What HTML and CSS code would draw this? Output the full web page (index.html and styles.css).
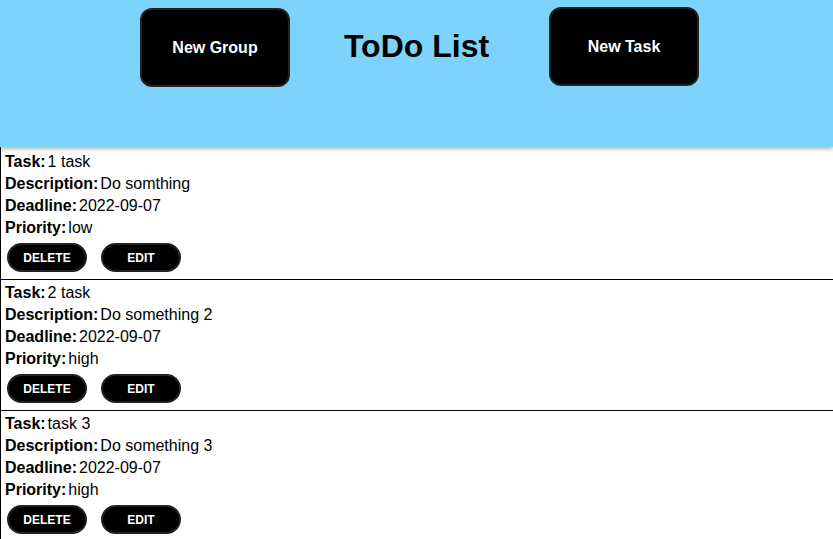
FILE: index.html
```html
<!DOCTYPE html>
<html>
<head>
<meta charset="utf-8">
<link rel="stylesheet" href="styles.css">
</head>
<body>
<header class="header">
  <button class="head-btn">New Group</button>
  <h1 class="title">ToDo List</h1>
  <button class="head-btn head-btn-right">New Task</button>
</header>
<main class="list">
  <div class="card">
    <div class="row"><b>Task:</b><span>1 task</span></div>
    <div class="row"><b>Description:</b><span>Do somthing</span></div>
    <div class="row"><b>Deadline:</b><span>2022-09-07</span></div>
    <div class="row"><b>Priority:</b><span>low</span></div>
    <div class="actions"><button class="pill">DELETE</button><button class="pill">EDIT</button></div>
  </div>
  <div class="card">
    <div class="row"><b>Task:</b><span>2 task</span></div>
    <div class="row"><b>Description:</b><span>Do something 2</span></div>
    <div class="row"><b>Deadline:</b><span>2022-09-07</span></div>
    <div class="row"><b>Priority:</b><span>high</span></div>
    <div class="actions"><button class="pill">DELETE</button><button class="pill">EDIT</button></div>
  </div>
  <div class="card">
    <div class="row"><b>Task:</b><span>task 3</span></div>
    <div class="row"><b>Description:</b><span>Do something 3</span></div>
    <div class="row"><b>Deadline:</b><span>2022-09-07</span></div>
    <div class="row"><b>Priority:</b><span>high</span></div>
    <div class="actions"><button class="pill">DELETE</button><button class="pill">EDIT</button></div>
  </div>
</main>
</body>
</html>
```
FILE: styles.css
```css
html, body {
  margin: 0;
  padding: 0;
  background: #fff;
  font-family: "Liberation Sans", Arial, sans-serif;
  color: #000;
  overflow: hidden;
}
.header {
  height: 147px;
  background: #7dd3fc;
  box-shadow: 0 2px 4px rgba(0,0,0,0.3);
  display: flex;
  align-items: flex-start;
  padding-left: 140px;
  box-sizing: border-box;
  position: relative;
  z-index: 1;
}
.head-btn {
  width: 150px;
  height: 79px;
  margin-top: 8px;
  background: #000;
  color: #fff;
  border: 2px solid #222;
  border-radius: 12px;
  font-family: "Liberation Sans", Arial, sans-serif;
  font-weight: bold;
  font-size: 16px;
}
.head-btn-right {
  margin-top: 7px;
}
.title {
  margin: 28px 0 0 0;
  width: 259px;
  padding-right: 6px;
  box-sizing: border-box;
  text-align: center;
  font-size: 32px;
  line-height: 37px;
  font-weight: bold;
}
.card {
  border-left: 1px solid #000;
  border-bottom: 1px solid #000;
  padding: 4px 0 0 4px;
  height: 128px;
}
.card + .card {
  padding-top: 2px;
  height: 128px;
}
.row {
  font-size: 16px;
  line-height: 22px;
  display: flex;
  gap: 2px;
}
.actions {
  display: flex;
  gap: 14px;
  margin: 4px 0 0 2px;
}
.pill {
  width: 80px;
  height: 29px;
  background: #000;
  color: #fff;
  border: 2px solid #222;
  border-radius: 15px;
  font-family: "Liberation Sans", Arial, sans-serif;
  font-weight: bold;
  font-size: 12px;
  padding: 0;
}
```
